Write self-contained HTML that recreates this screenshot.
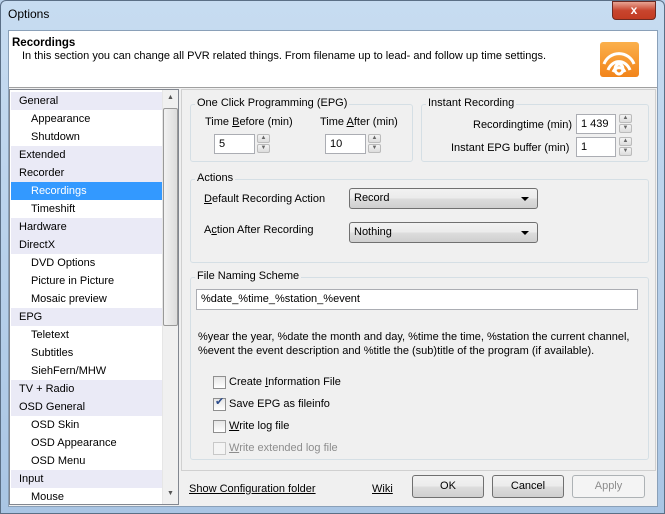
<!DOCTYPE html>
<html><head><style>
*{margin:0;padding:0;box-sizing:border-box}
body{width:665px;height:514px;overflow:hidden;font-family:"Liberation Sans",sans-serif;font-size:11px;color:#000;background:#b9d1ea;position:relative}
.a{position:absolute}
.win{left:0;top:0;width:665px;height:514px;background:linear-gradient(#c7dcf1,#a9c5e4);border:1px solid #5b6f86;border-radius:6px 6px 0 0}
.t{white-space:nowrap}
.grp{position:absolute;border:1px solid #d5dfe5;border-radius:3px;background:#f0f0f0}
.lbl{position:absolute;background:#f0f0f0;padding:0 2px;white-space:nowrap;top:-8px;left:4px}
.inp{position:absolute;background:#fff;border:1px solid #abadb3;height:20px;padding:3px 4px;white-space:nowrap}
.spin{position:absolute;width:13px;height:20px}
.spin div{height:9px;border:1px solid #bbb;background:linear-gradient(#f4f4f4,#dcdcdc);margin-bottom:1px;border-radius:2px;font-size:6px;line-height:7px;text-align:center;color:#666}
.cmb{position:absolute;height:21px;border:1px solid #707070;border-radius:3px;background:linear-gradient(#f2f2f2,#ebebeb 50%,#dddddd 51%,#cfcfcf);padding:3px 4px}
.cmb:after{content:"";position:absolute;right:8px;top:8px;border:4px solid transparent;border-top:4px solid #000;border-bottom:0}
.row{position:absolute;left:0;width:151px;height:18px;line-height:18px;white-space:nowrap}
.top{background:#eaeaf6;padding-left:8px}
.sub{padding-left:20px}
.cb{position:absolute;width:13px;height:13px;border:1px solid #8f8f8f;background:linear-gradient(#e6e6e6,#fff)}
.btn{position:absolute;height:23px;border:1px solid #707070;border-radius:3px;background:linear-gradient(#f2f2f2,#ebebeb 50%,#dddddd 51%,#cfcfcf);text-align:center;line-height:21px}
u{text-decoration:underline}
</style></head><body>
<div class="a win"></div>
<div class="a t" style="left:8px;top:7px;font-size:12px">Options</div>
<div class="a" style="left:612px;top:1px;width:44px;height:19px;border:1px solid #6d2a22;border-radius:0 0 4px 4px;background:linear-gradient(#e8a493,#c8452e 50%,#c23b22);color:#fff;font-weight:bold;text-align:center;line-height:17px;font-size:12px">x</div>
<div class="a" style="left:8px;top:30px;width:650px;height:477px;background:#f0f0f0;border:1px solid #8aa0b8"></div>
<div class="a" style="left:9px;top:31px;width:648px;height:57px;background:#fff;border-bottom:1px solid #a0a0a0"></div>
<div class="a t" style="left:12px;top:37px;font-weight:bold;font-size:11.5px">Recordings</div>
<div class="a t" style="left:22px;top:50px">In this section you can change all PVR related things. From filename up to lead- and follow up time settings.</div>
<div class="a" style="left:600px;top:42px;width:39px;height:35px;border-radius:3px;background:linear-gradient(#fbb04c,#f2841a);overflow:hidden">
<svg width="39" height="35"><g fill="none" stroke="#fff" stroke-width="3"><path d="M13 30a7 9 0 0 1 12 0"/><path d="M8 28a12 14 0 0 1 22 0"/><path d="M4 22a16 16 0 0 1 30 0"/></g><ellipse cx="19" cy="27" rx="4" ry="5" fill="none" stroke="#fff" stroke-width="3"/></svg></div>
<div class="a" style="left:9px;top:89px;width:170px;height:416px;background:#fff;border:1px solid #828790;overflow:hidden">
<div class="a" style="left:1px;top:2px;width:152px">
<div class="row top" style="top:0">General</div>
<div class="row sub" style="top:18px">Appearance</div>
<div class="row sub" style="top:36px">Shutdown</div>
<div class="row top" style="top:54px">Extended</div>
<div class="row top" style="top:72px">Recorder</div>
<div class="row sub" style="top:90px;background:#3399ff;color:#fff">Recordings</div>
<div class="row sub" style="top:108px">Timeshift</div>
<div class="row top" style="top:126px">Hardware</div>
<div class="row top" style="top:144px">DirectX</div>
<div class="row sub" style="top:162px">DVD Options</div>
<div class="row sub" style="top:180px">Picture in Picture</div>
<div class="row sub" style="top:198px">Mosaic preview</div>
<div class="row top" style="top:216px">EPG</div>
<div class="row sub" style="top:234px">Teletext</div>
<div class="row sub" style="top:252px">Subtitles</div>
<div class="row sub" style="top:270px">SiehFern/MHW</div>
<div class="row top" style="top:288px">TV + Radio</div>
<div class="row top" style="top:306px">OSD General</div>
<div class="row sub" style="top:324px">OSD Skin</div>
<div class="row sub" style="top:342px">OSD Appearance</div>
<div class="row sub" style="top:360px">OSD Menu</div>
<div class="row top" style="top:378px">Input</div>
<div class="row sub" style="top:396px">Mouse</div>
</div>
<div class="a" style="left:152px;top:0;width:17px;height:414px;background:#f0f0f0;border-left:1px solid #e6e6e6"></div>
<div class="a" style="left:153px;top:18px;width:15px;height:218px;border:1px solid #999;border-radius:2px;background:linear-gradient(90deg,#f2f2f2,#dcdcdc)"></div>
<div class="a" style="left:157px;top:4px;font-size:7px;color:#555">▲</div>
<div class="a" style="left:157px;top:400px;font-size:7px;color:#555">▼</div>
</div>
<div class="a" style="left:181px;top:89px;width:475px;height:382px;background:#f0f0f0;border:1px solid #d0d0d0"></div>
<div class="grp" style="left:190px;top:104px;width:223px;height:58px"><div class="lbl" style="left:4px">One Click Programming (EPG)</div></div>
<div class="a t" style="left:205px;top:116px">Time <u>B</u>efore (min)</div>
<div class="a t" style="left:320px;top:116px;width:92px;overflow:hidden">Time <u>A</u>fter (min)</div>
<div class="inp" style="left:214px;top:134px;width:41px">5</div>
<div class="spin" style="left:257px;top:134px"><div>▲</div><div>▼</div></div>
<div class="inp" style="left:325px;top:134px;width:41px">10</div>
<div class="spin" style="left:368px;top:134px"><div>▲</div><div>▼</div></div>
<div class="grp" style="left:421px;top:104px;width:228px;height:58px"><div class="lbl" style="left:4px">Instant Recording</div></div>
<div class="a t" style="left:473px;top:119px">Recordingtime (min)</div>
<div class="a t" style="left:451px;top:142px">Instant EPG buffer (min)</div>
<div class="inp" style="left:576px;top:114px;width:40px">1 439</div>
<div class="spin" style="left:619px;top:114px"><div>▲</div><div>▼</div></div>
<div class="inp" style="left:576px;top:137px;width:40px">1</div>
<div class="spin" style="left:619px;top:137px"><div>▲</div><div>▼</div></div>
<div class="grp" style="left:190px;top:179px;width:459px;height:84px"><div class="lbl" style="left:4px">Actions</div></div>
<div class="a t" style="left:204px;top:193px"><u>D</u>efault Recording Action</div>
<div class="a t" style="left:204px;top:224px">A<u>c</u>tion After Recording</div>
<div class="cmb" style="left:349px;top:188px;width:189px">Record</div>
<div class="cmb" style="left:349px;top:222px;width:189px">Nothing</div>
<div class="grp" style="left:190px;top:277px;width:459px;height:183px"><div class="lbl" style="left:4px">File Naming Scheme</div></div>
<div class="inp" style="left:196px;top:289px;width:442px;height:21px">%date_%time_%station_%event</div>
<div class="a t" style="left:198px;top:330px;line-height:14px">%year the year, %date the month and day, %time the time, %station the current channel,<br>%event the event description and %title the (sub)title of the program (if available).</div>
<div class="cb" style="left:213px;top:376px"></div><div class="a t" style="left:229px;top:376px">Create <u>I</u>nformation File</div>
<div class="cb" style="left:213px;top:398px"></div><div class="a" style="left:215px;top:395px;font-size:11px;color:#2a4a8a">✔</div><div class="a t" style="left:229px;top:398px">Save EPG as fileinfo</div>
<div class="cb" style="left:213px;top:420px"></div><div class="a t" style="left:229px;top:420px"><u>W</u>rite log file</div>
<div class="cb" style="left:213px;top:442px;border-color:#c8c8c8;background:#f4f4f4"></div><div class="a t" style="left:229px;top:442px;color:#8d8d8d"><u>W</u>rite extended log file</div>
<div class="a t" style="left:189px;top:483px"><u>Show Configuration folder</u></div>
<div class="a t" style="left:372px;top:483px"><u>Wiki</u></div>
<div class="btn" style="left:412px;top:475px;width:72px">OK</div>
<div class="btn" style="left:492px;top:475px;width:72px">Cancel</div>
<div class="btn" style="left:572px;top:475px;width:73px;border-color:#adb2b5;background:#f4f4f4;color:#8d8d8d">Apply</div>
</body></html>
